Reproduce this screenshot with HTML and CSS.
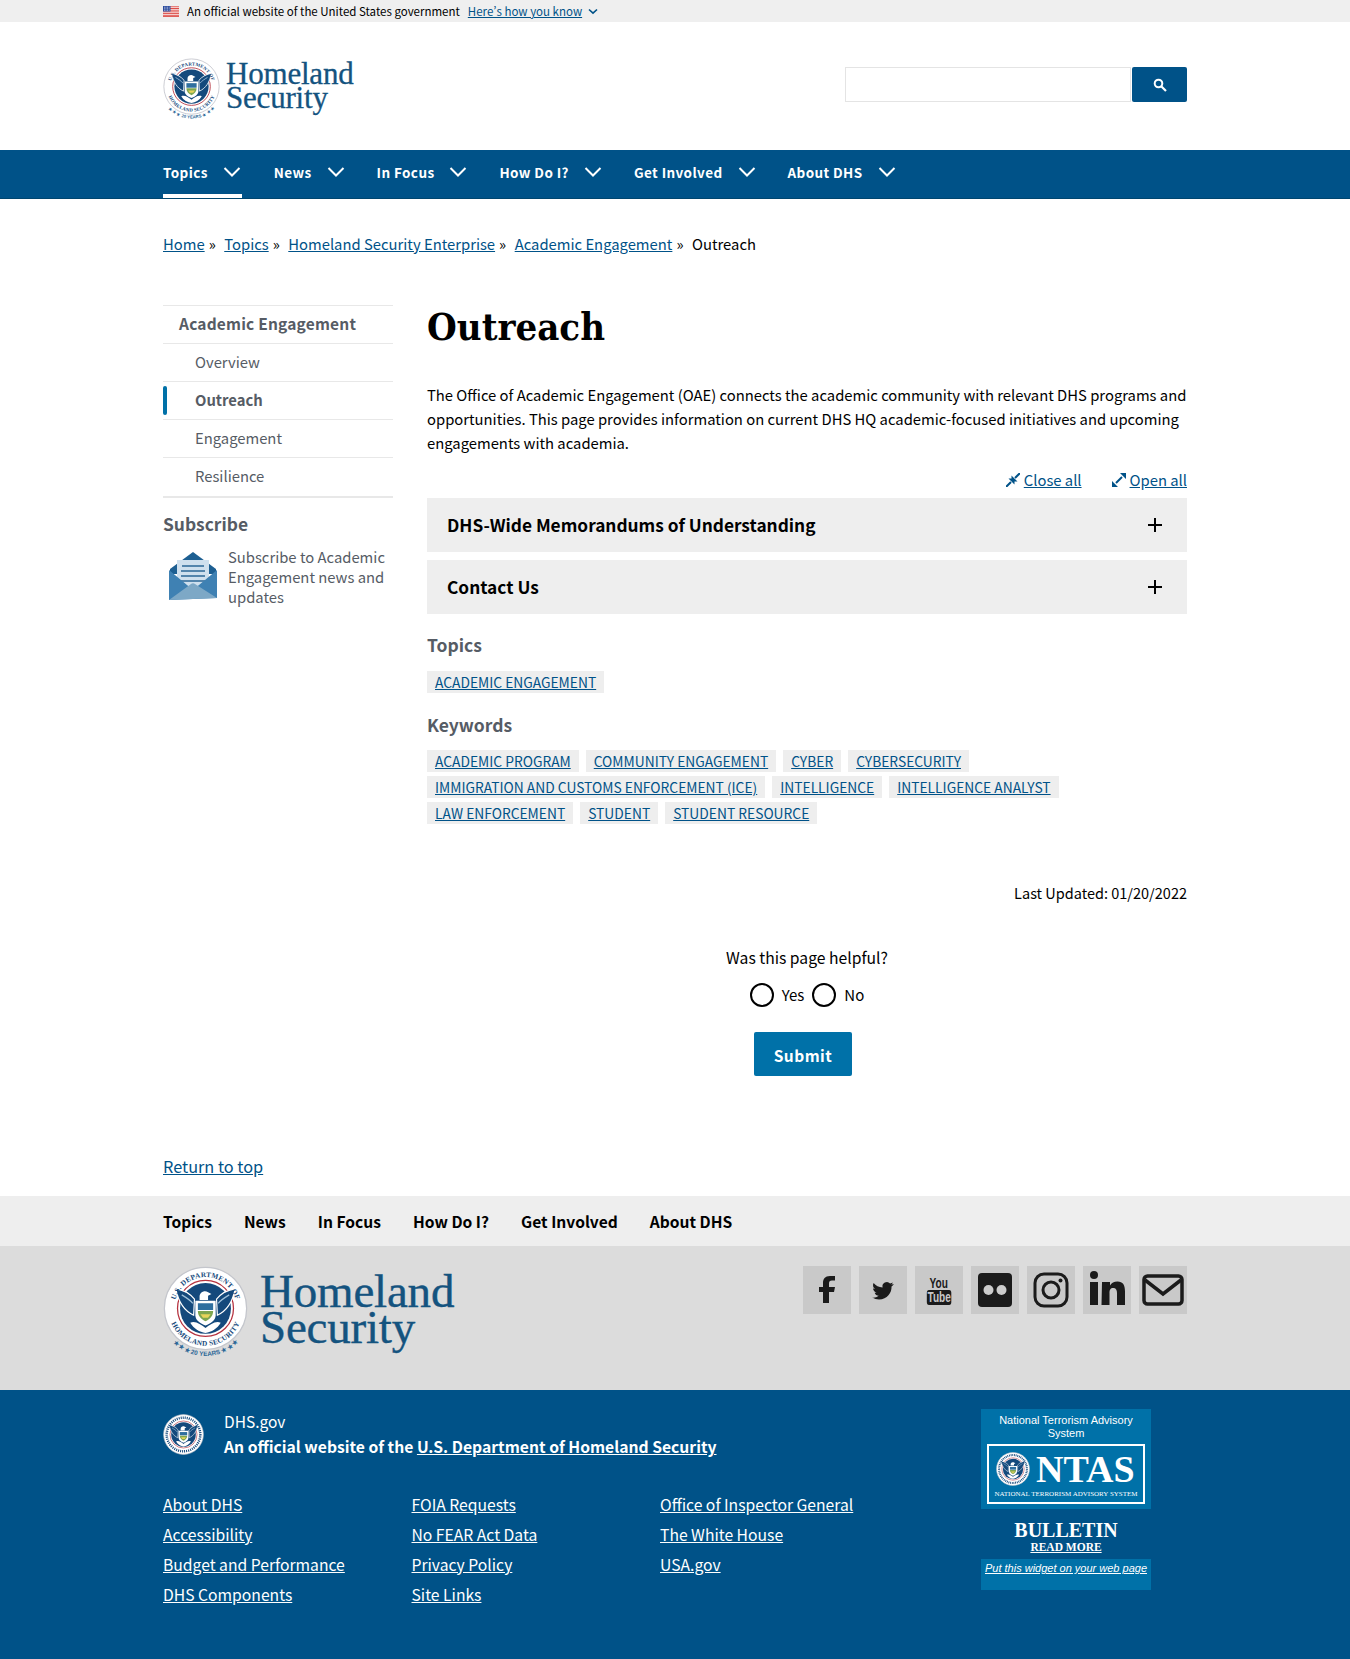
FILE: index.html
```html
<!DOCTYPE html>
<html lang="en">
<head>
    <meta charset="UTF-8">
    <meta name="viewport" content="width=device-width, initial-scale=1.0">
    <title>Outreach | Homeland Security</title>
    <link rel="stylesheet" href="styles.css">
</head>
<body>
    <svg class="defs" width="0" height="0" aria-hidden="true">
        <path id="ring-top" d="M13 50A37 37 0 0 1 87 50" fill="none"/>
        <path id="ring-bottom" d="M6 50A44 44 0 0 0 94 50" fill="none"/>
        <path id="arc" d="M4 82A56 56 0 0 0 96 82" fill="none"/>
        <symbol id="seal" viewBox="0 0 100 100">
            <circle cx="50" cy="50" r="48.500" fill="#fff" stroke="#c4c6cc" stroke-width="1.500"/>
            <circle cx="50" cy="50" r="33" fill="#fff" stroke="#b5323f" stroke-width="1.500"/>
            <circle cx="50" cy="50" r="30" fill="#14497c"/>
            <path d="M15 27c8 1 16 5 22 12l-1 19C25 53 18 42 15 27zM85 27c-8 1-16 5-22 12l1 19c11-5 18-16 21-31z" fill="#14497c" stroke="#fff" stroke-width="1.400"/>
            <path d="M22 34c5 3 10 6 13 10M78 34c-5 3-10 6-13 10" stroke="#9fc0da" stroke-width="1.500" fill="none"/>
            <path d="M43 36c0-5 6-8 10-5l4 2-4 2v5h-10z" fill="#fff"/>
            <path d="M38 41h24v17c0 6-6 10-12 12-6-2-12-6-12-12z" fill="#fff"/>
            <path d="M41 44h18v8H41z" fill="#2f6f9f"/>
            <path d="M41 53h18c0 6-4 10-9 12-5-2-9-6-9-12z" fill="#7ea650"/>
            <path d="M44 57h12l-3 4h-6z" fill="#e8d45a"/>
            <path d="M32 67c6-3 12 2 18 6 6-4 12-9 18-6-4 7-11 11-18 12-7-1-14-5-18-12z" fill="#fff"/>
        </symbol>
        <symbol id="seal-small" viewBox="0 0 100 100">
            <use href="#seal" width="100" height="100"/>
            <circle cx="50" cy="50" r="41" fill="none" stroke="#14497c" stroke-width="6" stroke-dasharray="2.500 2.500"/>
        </symbol>
        <symbol id="chev" viewBox="0 0 18 12">
            <path d="M1.500 2 9 9.500 16.500 2" fill="none" stroke="#fff" stroke-width="2"/>
        </symbol>
        <symbol id="plus" viewBox="0 0 16 16">
            <path d="M8 1v14M1 8h14" fill="none" stroke="#000" stroke-width="2"/>
        </symbol>
    </svg>

    <div class="gov-banner">
        <div class="wrap gov-row">
            <svg class="flag" viewBox="0 0 16 11" width="16" height="11">
                <rect width="16" height="11" fill="#fff"/>
                <path d="M0 .8h16M0 2.500h16M0 4.200h16M0 5.900h16M0 7.600h16M0 9.300h16M0 10.600h16" stroke="#d83933" stroke-width=".9"/>
                <rect width="7.500" height="5.500" fill="#2a4a9c"/>
                <path d="M1 1.200h5.500M1 2.800h5.500M1 4.300h5.500" stroke="#fff" stroke-width=".7" stroke-dasharray=".8 .8"/>
            </svg>
            <span>An official website of the United States government</span>
            <a href="#" class="how">Here’s how you know</a>
            <svg class="how-chev" width="10" height="7" viewBox="0 0 10 7"><path d="M1 1.500 5 5.200 9 1.500" fill="none" stroke="#005288" stroke-width="1.600"/></svg>
        </div>
    </div>

    <header class="wrap site-head">
        <a href="#" class="logo">
            <svg class="seal" width="57" height="64" viewBox="0 0 100 112">
                <use href="#seal" width="100" height="100"/>
                <text class="ring-text"><textPath href="#ring-top" startOffset="50%" text-anchor="middle">U.S. DEPARTMENT OF</textPath></text>
                <text class="ring-text"><textPath href="#ring-bottom" startOffset="50%" text-anchor="middle">HOMELAND SECURITY</textPath></text>
                <text class="years-text"><textPath href="#arc" startOffset="50%" text-anchor="middle">★ ★ ★ 20 YEARS ★ ★ ★</textPath></text>
            </svg>
            <span class="logo-text"><span>Homeland</span><span>Security</span></span>
        </a>
        <form class="search">
            <input type="text" class="search-box" aria-label="Search">
            <button type="button" class="search-btn" aria-label="Search">
                <svg width="14" height="14" viewBox="0 0 14 14"><circle cx="5.500" cy="5.500" r="3.800" fill="none" stroke="#fff" stroke-width="2"/><path d="M8.500 8.500 13 13" stroke="#fff" stroke-width="2.200"/></svg>
            </button>
        </form>
    </header>

    <nav class="main-nav">
        <ul class="wrap nav-list">
            <li class="active"><a href="#">Topics</a><svg width="18" height="12"><use href="#chev"/></svg></li>
            <li><a href="#">News</a><svg width="18" height="12"><use href="#chev"/></svg></li>
            <li><a href="#">In Focus</a><svg width="18" height="12"><use href="#chev"/></svg></li>
            <li><a href="#">How Do I?</a><svg width="18" height="12"><use href="#chev"/></svg></li>
            <li><a href="#">Get Involved</a><svg width="18" height="12"><use href="#chev"/></svg></li>
            <li><a href="#">About DHS</a><svg width="18" height="12"><use href="#chev"/></svg></li>
        </ul>
    </nav>

    <div class="wrap crumbs">
        <a href="#">Home</a><i>»</i>
        <a href="#">Topics</a><i>»</i>
        <a href="#">Homeland Security Enterprise</a><i>»</i>
        <a href="#">Academic Engagement</a><i>»</i>
        <span>Outreach</span>
    </div>

    <div class="wrap page">
        <aside class="side">
            <ul class="side-nav">
                <li class="side-top"><a href="#">Academic Engagement</a></li>
                <li><a href="#">Overview</a></li>
                <li class="current"><a href="#">Outreach</a></li>
                <li><a href="#">Engagement</a></li>
                <li><a href="#">Resilience</a></li>
            </ul>
            <h2 class="side-title">Subscribe</h2>
            <div class="subscribe">
                <svg width="54" height="52" viewBox="0 0 54 52">
                    <path d="M27 0 50 17v5H4v-5z" fill="#1d5f92"/>
                    <path d="M11 8h32v30H11z" fill="#cfe0ee"/>
                    <path d="M16 14h22M15 19h24M15 24h24M15 29h24" stroke="#2c6797" stroke-width="1.600"/>
                    <path d="M3 18 27 38 51 18v28L3 48z" fill="#3f81b3"/>
                    <path d="M3 48 25 32c1-1 3-1 4 0l22 14z" fill="#7da8c6"/>
                </svg>
                <a href="#">Subscribe to Academic Engagement news and updates</a>
            </div>
        </aside>

        <main class="content">
            <h1>Outreach</h1>
            <p class="intro">The Office of Academic Engagement (OAE) connects the academic community with relevant DHS programs and opportunities. This page provides information on current DHS HQ academic-focused initiatives and upcoming engagements with academia.</p>
            <div class="toggles">
                <span class="toggle">
                    <svg width="14" height="14" viewBox="0 0 14 14"><path d="M0 14 5 9M14 0 9 5" stroke="#005288" stroke-width="2"/><path d="M2.500 5.500h6v6zM11.500 8.500h-6v-6z" fill="#005288"/></svg>
                    <a href="#">Close all</a>
                </span>
                <span class="toggle">
                    <svg width="14" height="14" viewBox="0 0 14 14"><path d="M4 10 10 4" stroke="#005288" stroke-width="2"/><path d="M0 14V8l6 6zM14 0v6L8 0z" fill="#005288"/></svg>
                    <a href="#">Open all</a>
                </span>
            </div>
            <div class="acc"><span>DHS-Wide Memorandums of Understanding</span><svg width="16" height="16"><use href="#plus"/></svg></div>
            <div class="acc"><span>Contact Us</span><svg width="16" height="16"><use href="#plus"/></svg></div>

            <h3 class="tag-title">Topics</h3>
            <div class="tags">
                <a href="#">Academic Engagement</a>
            </div>
            <h3 class="tag-title">Keywords</h3>
            <div class="tags">
                <a href="#">Academic Program</a>
                <a href="#">Community Engagement</a>
                <a href="#">Cyber</a>
                <a href="#">Cybersecurity</a>
                <a href="#">Immigration and Customs Enforcement (ICE)</a>
                <a href="#">Intelligence</a>
                <a href="#">Intelligence Analyst</a>
                <a href="#">Law Enforcement</a>
                <a href="#">Student</a>
                <a href="#">Student Resource</a>
            </div>

            <p class="updated">Last Updated: 01/20/2022</p>

            <form class="helpful">
                <p>Was this page helpful?</p>
                <div class="radios">
                    <span class="radio"></span><span>Yes</span>
                    <span class="radio"></span><span>No</span>
                </div>
                <button type="button" class="submit">Submit</button>
            </form>
        </main>
    </div>

    <div class="wrap to-top"><a href="#">Return to top</a></div>

    <div class="sec-nav">
        <ul class="wrap sec-list">
            <li><a href="#">Topics</a></li>
            <li><a href="#">News</a></li>
            <li><a href="#">In Focus</a></li>
            <li><a href="#">How Do I?</a></li>
            <li><a href="#">Get Involved</a></li>
            <li><a href="#">About DHS</a></li>
        </ul>
    </div>

    <div class="foot-grey">
        <div class="wrap foot-grey-row">
            <a href="#" class="logo logo-big">
                <svg class="seal" width="85" height="95" viewBox="0 0 100 112">
                    <use href="#seal" width="100" height="100"/>
                    <text class="ring-text"><textPath href="#ring-top" startOffset="50%" text-anchor="middle">U.S. DEPARTMENT OF</textPath></text>
                    <text class="ring-text"><textPath href="#ring-bottom" startOffset="50%" text-anchor="middle">HOMELAND SECURITY</textPath></text>
                    <text class="years-text"><textPath href="#arc" startOffset="50%" text-anchor="middle">★ ★ ★ 20 YEARS ★ ★ ★</textPath></text>
                </svg>
                <span class="logo-text"><span>Homeland</span><span>Security</span></span>
            </a>
            <div class="social">
                <a href="#" aria-label="Facebook"><svg viewBox="0 0 48 48"><path d="M26 37V26h5l1-5h-6v-3.500c0-2 .8-3 3-3h3V10h-5c-5 0-7 3-7 7v4h-4v5h4v11z" fill="#1b1b1b"/></svg></a>
                <a href="#" aria-label="Twitter"><svg viewBox="0 0 48 48"><g transform="translate(5.500 6) scale(.8)"><path d="M36 15c-1 .5-2 .8-3 1 1-.6 2-1.600 2.300-3-1 .6-2 1-3.300 1.300A5.500 5.500 0 0 0 22.600 19.300C18 19 14 17 11.400 13.700c-1.500 2.600-.8 5.700 1.700 7.400-.9 0-1.700-.3-2.400-.7 0 2.600 1.900 4.900 4.400 5.400-.8.200-1.600.2-2.400.1.700 2.200 2.700 3.700 5.100 3.800-2.300 1.800-5.200 2.600-8 2.300 2.400 1.600 5.300 2.500 8.400 2.500 10.200 0 16-8.600 15.600-16.300 1.100-.8 2-1.700 2.700-2.800z" fill="#1b1b1b"/></g></svg></a>
                <a href="#" aria-label="YouTube" class="yt"><span class="yt-you">You</span><span class="yt-tube">Tube</span></a>
                <a href="#" aria-label="Flickr"><svg viewBox="0 0 48 48"><rect x="7" y="7" width="34" height="34" rx="4" fill="#1b1b1b"/><circle cx="17.500" cy="24" r="5" fill="#ccc"/><circle cx="30.500" cy="24" r="5" fill="#ccc"/></svg></a>
                <a href="#" aria-label="Instagram"><svg viewBox="0 0 48 48"><rect x="8" y="8" width="32" height="32" rx="9" fill="none" stroke="#1b1b1b" stroke-width="3"/><circle cx="24" cy="24" r="8" fill="none" stroke="#1b1b1b" stroke-width="3"/><circle cx="33.500" cy="14.500" r="2" fill="#1b1b1b"/></svg></a>
                <a href="#" aria-label="LinkedIn"><svg viewBox="0 0 48 48"><circle cx="11" cy="9" r="4" fill="#1b1b1b"/><path d="M7 16h8v23H7zM19 16h8v3.500c1.500-2.500 4-4 7.500-4 5.500 0 7.500 3.500 7.500 10V39h-8V27c0-3-1-5-3.700-5-3 0-3.800 2-3.800 5v12h-8z" fill="#1b1b1b"/></svg></a>
                <a href="#" aria-label="Email"><svg viewBox="0 0 48 48"><rect x="5" y="10" width="38" height="28" rx="3.500" fill="none" stroke="#1b1b1b" stroke-width="3.500"/><path d="M6 14 24 28 42 14" fill="none" stroke="#1b1b1b" stroke-width="3.500"/></svg></a>
            </div>
        </div>
    </div>

    <footer class="foot-blue">
        <div class="wrap foot-blue-row">
            <div class="foot-main">
                <div class="identity">
                    <svg width="41" height="41"><use href="#seal-small"/></svg>
                    <div>
                        <div class="dhs-gov">DHS.gov</div>
                        <div class="official">An official website of the <a href="#">U.S. Department of Homeland Security</a></div>
                    </div>
                </div>
                <div class="foot-links">
                    <ul>
                        <li><a href="#">About DHS</a></li>
                        <li><a href="#">Accessibility</a></li>
                        <li><a href="#">Budget and Performance</a></li>
                        <li><a href="#">DHS Components</a></li>
                    </ul>
                    <ul>
                        <li><a href="#">FOIA Requests</a></li>
                        <li><a href="#">No FEAR Act Data</a></li>
                        <li><a href="#">Privacy Policy</a></li>
                        <li><a href="#">Site Links</a></li>
                    </ul>
                    <ul>
                        <li><a href="#">Office of Inspector General</a></li>
                        <li><a href="#">The White House</a></li>
                        <li><a href="#">USA.gov</a></li>
                    </ul>
                </div>
            </div>
            <div class="ntas">
                <div class="ntas-top">
                    <div class="ntas-head">National Terrorism Advisory System</div>
                    <div class="ntas-box">
                        <div class="ntas-logo">
                            <svg width="34" height="34"><use href="#seal-small"/></svg>
                            <span>NTAS</span>
                        </div>
                        <div class="ntas-sub">National Terrorism Advisory System</div>
                    </div>
                </div>
                <div class="ntas-mid">
                    <div class="bulletin">BULLETIN</div>
                    <a href="#" class="read-more">READ MORE</a>
                </div>
                <div class="ntas-bottom"><a href="#">Put this widget on your web page</a></div>
            </div>
        </div>
    </footer>
</body>
</html>
```

FILE: styles.css
```css
* { box-sizing: border-box; }
body { margin: 0; font-family: "Noto Sans CJK SC", "Noto Sans", sans-serif; font-variant-east-asian: proportional-width; font-size: 14.8px; line-height: 24px; color: #000; background: #fff; }
a { color: #005288; }
ul { list-style: none; margin: 0; padding: 0; }
.defs { position: absolute; }
.wrap { width: 1024px; margin-left: 163px; }

.ring-text { font: bold 8.500px "Liberation Serif", serif; fill: #14497c; letter-spacing: .3px; }
.years-text { font: bold 7.500px "Liberation Sans", sans-serif; fill: #2c6797; }

.gov-banner { background: #efefef; height: 22px; font-size: 11.500px; line-height: 22px; }
.gov-row { display: flex; align-items: center; }
.flag { margin-right: 8px; }
.how { margin-left: 8px; }
.how-chev { margin-left: 6px; }

.site-head { height: 128px; display: flex; justify-content: space-between; padding-top: 36px; }
.logo { display: flex; text-decoration: none; color: #14537f; align-items: flex-start; }
.seal { display: block; flex: none; }
.logo-text { font-family: "Liberation Serif", serif; font-size: 31px; margin: 4px 0 0 6px; letter-spacing: -.2px; -webkit-text-stroke: .3px #14537f; }
.logo-text span { display: block; height: 24px; line-height: 24px; }
.logo-big .logo-text { font-size: 47px; margin: 7px 0 0 12px; -webkit-text-stroke: .4px #14537f; }
.logo-big .logo-text span { height: 36px; line-height: 36px; }

.search { display: flex; margin-top: 9px; }
.search-box { width: 286px; height: 35px; border: 1px solid #e4e4e4; background: #fff; padding: 0; margin: 0 1px 0 0; }
.search-btn { width: 55px; height: 35px; border: 0; border-radius: 2px; background: #005288; padding: 0; display: flex; align-items: center; justify-content: center; }

.main-nav { background: #005288; height: 49px; border-bottom: 1px solid #00466f; }
.nav-list { display: flex; gap: 32px; height: 48px; }
.nav-list li { display: flex; align-items: center; gap: 15px; height: 48px; padding-bottom: 5px; }
.nav-list a { color: #fff; font-size: 13.500px; font-weight: bold; letter-spacing: .4px; text-decoration: none; }
.nav-list .active { border-bottom: 4px solid #fff; padding: 0 1px 1px 0; }

.crumbs { margin-top: 33px; height: 24px; display: flex; white-space: nowrap; }
.crumbs i { font-style: normal; margin: 0 8.500px 0 4px; }

.page { display: flex; margin-top: 49px; }
.side { width: 230px; margin-right: 34px; flex: none; color: #565c65; }
.side-nav { border-top: 1px solid #e8e8e8; border-bottom: 2px solid #e8e8e8; }
.side-nav li { height: 38px; border-bottom: 1px solid #e8e8e8; padding: 0 0 2px 32px; display: flex; align-items: center; position: relative; }
.side-nav li:last-child { border-bottom: 0; }
.side-nav a { color: #565c65; text-decoration: none; }
.side-nav .side-top { padding: 0 0 4px 16px; }
.side-nav .side-top a { font-weight: bold; font-size: 15.500px; letter-spacing: .2px; }
.side-nav .current a { font-weight: bold; }
.side-nav .current::before { content: ""; position: absolute; left: 0; top: 4px; width: 4px; height: 29px; border-radius: 2px; background: #0071a8; }
.side-title { font-size: 17.400px; line-height: 28px; margin: 12px 0 9px; font-weight: bold; }
.subscribe { display: flex; gap: 8px; padding-left: 3px; }
.subscribe a { color: #565c65; text-decoration: none; line-height: 20px; }
.subscribe svg { flex: none; margin-top: 5px; }

.content { width: 760px; }
h1 { font-family: "DejaVu Serif Condensed", "DejaVu Serif", serif; font-stretch: condensed; font-size: 38px; line-height: 44px; margin: 0 0 34px; font-weight: bold; }
.intro { margin: 0 0 13px; }
.toggles { display: flex; justify-content: flex-end; gap: 30px; height: 24px; }
.toggle { display: flex; align-items: center; gap: 4px; }
.acc { background: #eee; height: 54px; margin-top: 8px; padding: 0 24px 0 20px; display: flex; justify-content: space-between; align-items: center; font-size: 17.300px; font-weight: bold; }
.toggles + .acc { margin-top: 6px; }
.tag-title { font-size: 17.500px; line-height: 28px; margin: 17px 0 12px; font-weight: bold; color: #565c65; }
.tags + .tag-title { margin: 18px 0 11px; }
.tags { display: flex; flex-wrap: wrap; gap: 4px 7px; }
.tags a { background: #eee; height: 22px; line-height: 22px; padding: 0 8px; font-size: 13.800px; text-transform: uppercase; }

.updated { text-align: right; margin: 57px 0 0; font-size: 14.500px; }
.helpful { text-align: center; margin-top: 41px; font-size: 15.700px; }
.helpful p { margin: 0; }
.radios { display: flex; justify-content: center; align-items: center; gap: 8px; margin-top: 13px; height: 24px; font-size: 15px; }
.radio { width: 24px; height: 24px; border: 2px solid #000; border-radius: 50%; }
.submit { display: block; width: 98px; height: 44px; margin: 25px auto 0 calc(50% - 53px); background: #0071a8; color: #fff; border: 0; border-radius: 2px; font: bold 15.500px/44px "Noto Sans CJK SC", sans-serif; letter-spacing: .5px; }

.to-top { margin-top: 78px; height: 24px; font-size: 16.300px; }
.sec-nav { background: #eee; height: 50px; margin-top: 18px; }
.sec-list { display: flex; gap: 32px; align-items: center; height: 50px; }
.sec-list a { color: #000; font-weight: bold; font-size: 15.600px; text-decoration: none; }

.foot-grey { background: #dcdcdc; height: 144px; padding-top: 20px; }
.foot-grey-row { display: flex; justify-content: space-between; }
.social { display: flex; gap: 8px; }
.social a { width: 48px; height: 48px; background: #c9c9c9; display: flex; flex-direction: column; align-items: center; justify-content: center; text-decoration: none; }
.social svg { width: 48px; height: 48px; }
.yt-you { font: bold 14px/14px "Liberation Sans", sans-serif; color: #1b1b1b; transform: scaleX(.72); }
.yt-tube { font: bold 14px/15px "Liberation Sans", sans-serif; color: #c9c9c9; background: #1b1b1b; border-radius: 3px; padding: 0 1px; transform: scaleX(.72); }

.foot-blue { background: #005288; color: #fff; height: 270px; padding-top: 19px; }
.foot-blue a { color: #fff; }
.foot-blue-row { display: flex; justify-content: space-between; }
.identity { display: flex; gap: 20px; align-items: center; }
.dhs-gov { font-size: 15.500px; line-height: 25px; }
.official { font-size: 15.700px; line-height: 25px; font-weight: bold; }
.foot-links { display: flex; margin-top: 31px; }
.foot-links ul { width: 248.500px; }
.foot-links li { height: 30px; line-height: 30px; font-size: 15.700px; }

.ntas { width: 170px; margin-right: 36px; font-family: "Liberation Sans", sans-serif; }
.ntas-top { background: #0071a8; height: 100px; padding: 5px 6px 0; }
.ntas-head { font-size: 11px; line-height: 13px; text-align: center; }
.ntas-box { border: 2px solid #fff; height: 60px; margin-top: 4px; padding: 4px 5px 0; }
.ntas-logo { display: flex; align-items: center; gap: 6px; height: 38px; padding-left: 2px; }
.ntas-logo span { font: bold 38px/38px "Liberation Serif", serif; }
.ntas-sub { font: 7px/10px "Liberation Serif", serif; text-transform: uppercase; text-align: center; white-space: nowrap; margin-top: 1px; }
.ntas-mid { height: 50px; text-align: center; padding-top: 11px; font-family: "Liberation Serif", serif; }
.bulletin { font-size: 20px; line-height: 20px; font-weight: bold; }
.read-more { display: block; width: max-content; margin: 0 auto; font-size: 11.500px; line-height: 14px; font-weight: bold; }
.ntas-bottom { background: #0071a8; height: 31px; font-size: 11px; line-height: 13px; font-style: italic; text-align: center; padding-top: 3px; }
```
